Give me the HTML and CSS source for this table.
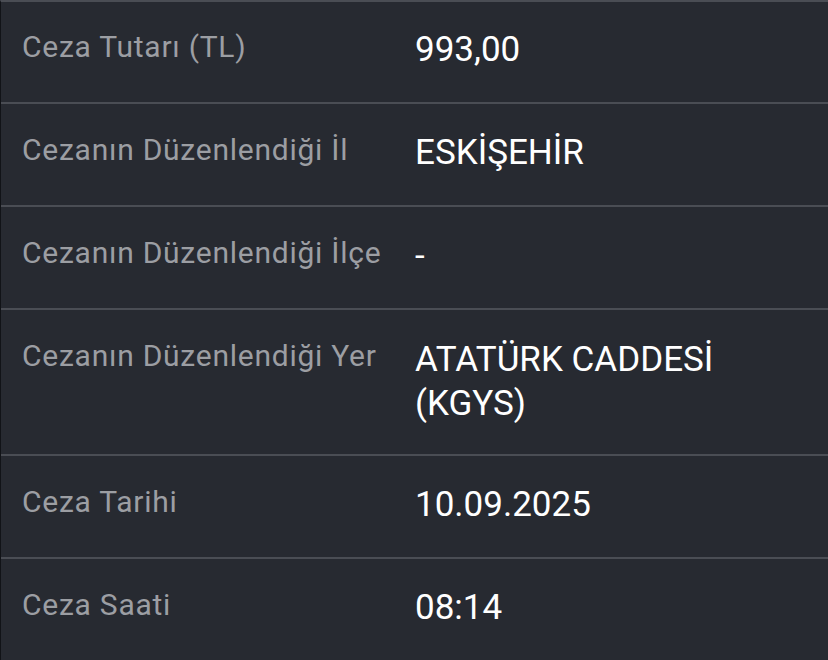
FILE: index.html
```html
<!DOCTYPE html>
<html lang="tr">
<head>
<meta charset="utf-8">
<link rel="stylesheet" href="styles.css">
</head>
<body>
<div class="table">
  <div class="row"><div class="label">Ceza Tutarı (TL)</div><div class="value">993,00</div></div>
  <div class="row"><div class="label">Cezanın Düzenlendiği İl</div><div class="value">ESKİŞEHİR</div></div>
  <div class="row"><div class="label">Cezanın Düzenlendiği İlçe</div><div class="value">-</div></div>
  <div class="row tall"><div class="label">Cezanın Düzenlendiği Yer</div><div class="value">ATATÜRK CADDESİ<br>(KGYS)</div></div>
  <div class="row"><div class="label">Ceza Tarihi</div><div class="value">10.09.2025</div></div>
  <div class="row last"><div class="label">Ceza Saati</div><div class="value">08:14</div></div>
</div>
</body>
</html>
```
FILE: styles.css
```css
html, body {
  margin: 0;
  padding: 0;
  background: #272a31;
}
body {
  font-family: Roboto, "Noto Sans", sans-serif;
  width: 828px;
  height: 660px;
  overflow: hidden;
}
.table {
  border-top: 2px solid #4a4d54;
  border-left: 1px solid #111317;
  height: 660px;
  box-sizing: border-box;
}
.row {
  display: grid;
  grid-template-columns: 393px 1fr;
  align-items: center;
  height: 101px;
  padding-left: 21px;
  border-bottom: 2px solid #4a4d54;
  box-sizing: content-box;
}
.row:first-child { height: 100px; }
.row.tall {
  height: 144px;
  align-items: start;
}
.row.tall .label { padding-top: 26px; margin-bottom: 0; }
.row.tall .value { padding-top: 28px; margin-bottom: 0; }
.row.last { border-bottom: none; }
.label {
  color: #9c9ea3;
  font-size: 30px;
  letter-spacing: 0.75px;
  line-height: 40px;
  margin-bottom: 10px;
}
.value {
  color: #ffffff;
  font-size: 35px;
  line-height: 44px;
  margin-bottom: 4px;
}
```
